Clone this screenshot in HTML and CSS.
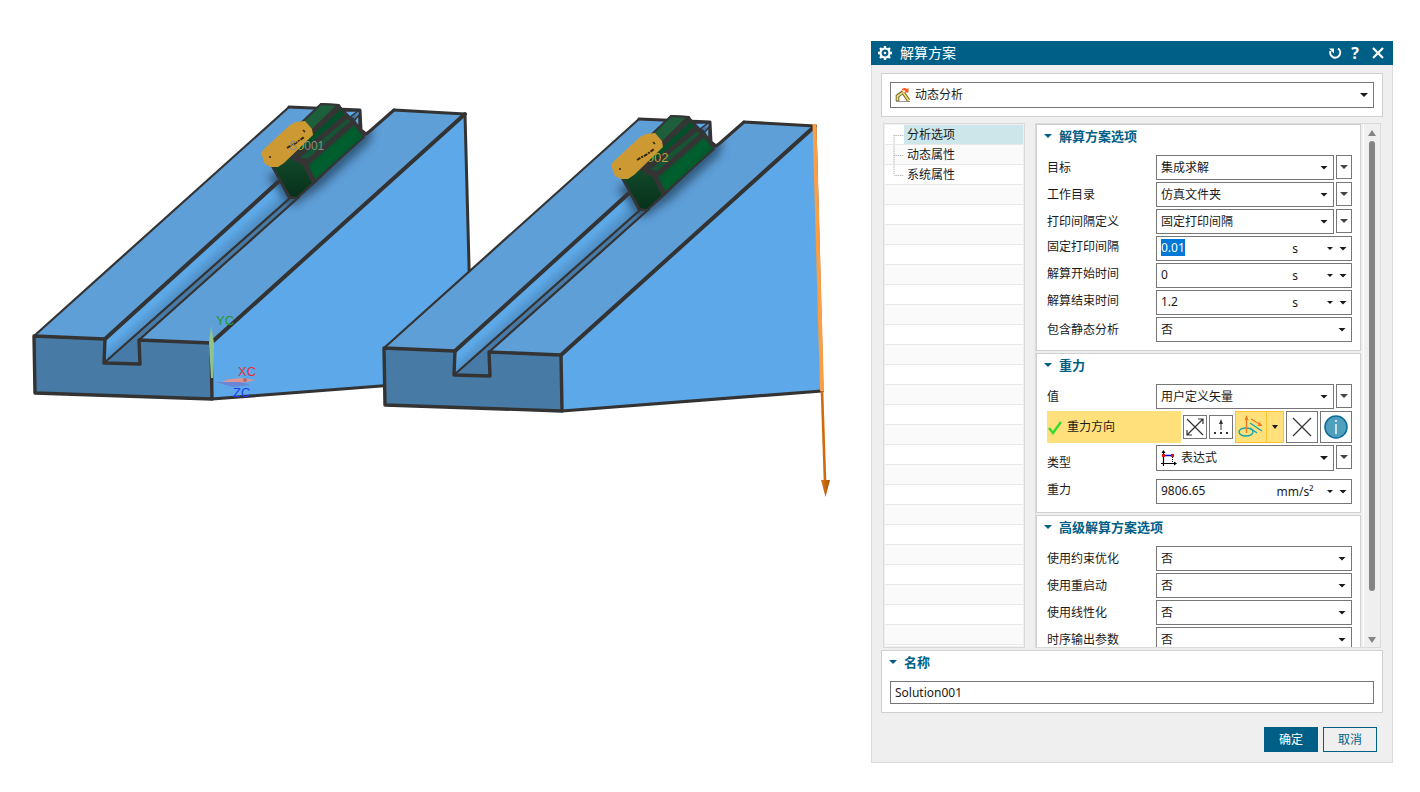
FILE: index.html
```html
<!DOCTYPE html>
<html lang="zh-CN">
<head>
<meta charset="utf-8">
<title>解算方案</title>
<link rel="stylesheet" href="styles.css">
</head>
<body>
<main class="app">
  <svg class="scene" viewBox="0 0 871 792" preserveAspectRatio="xMinYMin meet" aria-label="模型视图">
    <defs>
      <linearGradient id="wall" gradientUnits="userSpaceOnUse" x1="180" y1="271" x2="200" y2="293">
        <stop offset="0.2" stop-color="#5da9e8"/><stop offset="1" stop-color="#4173a0"/>
      </linearGradient>
      <linearGradient id="side" x1="0" y1="0" x2="1" y2="1">
        <stop offset="0" stop-color="#00461f"/><stop offset="0.5" stop-color="#00602f"/><stop offset="1" stop-color="#003818"/>
      </linearGradient>
      <linearGradient id="front" x1="0" y1="0" x2="0" y2="1">
        <stop offset="0" stop-color="#134a2b"/><stop offset="1" stop-color="#06301a"/>
      </linearGradient>
      <filter id="soft" x="-30%" y="-30%" width="160%" height="160%"><feGaussianBlur stdDeviation="5"/></filter>
      <clipPath id="topface"><path d="M34 336 L289 107 L360 110 L361 130 L366 134 L370 131 L394 110 L465 114 L211 343 L104 363 Z"/></clipPath>
      <g id="ramp">
        <path d="M34 336 L289 107 L360 110 L361 130 L366 134 L370 131 L394 110 L465 114 L211 343 L139 340 L140 364 L104 363 L105 339 Z" fill="#5f9fd8"/>
        <path d="M211 343 L465 114 L472 379 L212 399 Z" fill="#5da8e8"/>
        <path d="M105 339 L278 182 L300 197 L104 363 Z" fill="url(#wall)"/>
        <path d="M104 363 L290 199 L299 197 L139 340 L140 364 Z" fill="#477aa6"/>
        <path d="M34 336 L105 339 L104 363 L140 364 L139 340 L211 343 L212 399 L35 393 Z" fill="#477ba6"/>
        <path d="M267 177 L292 206 L320 188 L370 142 L372 128 L340 105 L300 160 Z" fill="#24435f" opacity="0.75" filter="url(#soft)" clip-path="url(#topface)"/>
        <g fill="none" stroke="#333333" stroke-linejoin="round" stroke-linecap="round">
          <path stroke-width="2.2" d="M34 336 L289 107"/>
          <path stroke-width="3" d="M289 107 L360 110 L361 130 L366 134 L370 131 L394 110"/>
          <path stroke-width="3" d="M394 110 L465 114 L472 379"/>
          <path stroke-width="4" d="M105 339 L278 182"/>
          <path stroke-width="2.2" d="M104 363 L290 198 M139 340 L299 197"/>
          <path stroke-width="4" d="M211 343 L465 114"/>
          <path stroke-width="3.4" d="M34 336 L105 339 L104 363 L140 364 L139 340 L211 343 L212 399 L35 393 Z"/>
          <path stroke-width="3.2" d="M212 399 L472 379"/>
        </g>
        <path d="M344 111 L358 111 L350 117 Z M354 121 L359 115 L359 127 Z" fill="#5da8e8" stroke="#333" stroke-width="1.5"/>
        <g stroke="#353535" stroke-width="2" stroke-linejoin="round">
          <path d="M272 166 L321 104 L339 105 L345 115 L353 119 L364 135 L314 183 L297 198 L289 198 Z" fill="#353535"/>
          <path d="M280 143 L321 104 L338 105 L298 144 Z" fill="#1d5f3a"/>
          <path d="M341 108 L345 115 L302 152 L298 147 Z" fill="#00512a"/>
          <path d="M347 118 L352 121 L308 160 L298 158 Z" fill="#175335"/>
          <path d="M354 124 L364 137 L315 181 L307 165 Z" fill="url(#side)"/>
          <path d="M272 166 L288 156 L304 165 L313 183 L297 198 L290 197 Z" fill="url(#front)"/>
        </g>
      </g>
      <g id="tag">
        <path d="M261 153 L264 149 L290 125 L296 122 L305 121 L312 129 L313 135 L284 163 L278 167 L271 167 L265 164 Z" fill="#cc9933"/>
        <path d="M287 148 L292 145 L296 143 L304 137" fill="none" stroke="#33280f" stroke-width="2" stroke-dasharray="4 1 2 1"/>
        <path d="M269 157 h2 M303 130 l2 2" stroke="#33280f" stroke-width="1.5"/>
      </g>
      <linearGradient id="arrowhead"><stop offset="0" stop-color="#e0781c"/><stop offset="1" stop-color="#a85205"/></linearGradient>
    </defs>
    <use href="#ramp"/>
    <use href="#tag"/>
    <text x="289" y="150" class="tag-text tag-text-muted">S<tspan class="tag-text">0</tspan>001</text>
    <path d="M209 343 L211 326 L214 343 L213 378 L211 378 Z" fill="#8fc48c"/>
    <path d="M215 383 L236 384 L250 381 L243 379 L238 379 Z" fill="#dc9b9b"/>
    <path d="M223 380 L240 378 L256 380 L241 383 Z" fill="#df9494"/>
    <path d="M215 382 L240 382 L251 385 L233 387 Z" fill="#6a86d6"/>
    <circle cx="245" cy="380" r="2" fill="#b06868"/>
    <text x="216" y="325" class="axis axis-y">YC</text>
    <text x="238" y="376" class="axis axis-x">XC</text>
    <text x="233" y="397" class="axis axis-z">ZC</text>
    <use href="#ramp" x="350" y="12"/>
    <text x="638" y="162" class="tag-text">S002</text>
    <use href="#tag" x="350" y="12"/>
    <path d="M814.500 124 L822 391" stroke="#fa9f45" stroke-width="4" fill="none"/>
    <path d="M822 391 L825 481" stroke="#d06a0c" stroke-width="2.600" fill="none"/>
    <path d="M821 480 L830 480 L825.500 497 Z" fill="url(#arrowhead)"/>
  </svg>

  <section class="dialog" role="dialog" aria-labelledby="dlg-title">
    <header class="titlebar">
      <svg class="gear" viewBox="0 0 14 14" aria-hidden="true"><circle cx="7" cy="7" r="4.500" fill="none" stroke="#fff" stroke-width="2.200"/><circle cx="7" cy="7" r="1.300" fill="#fff"/><path d="M7 0v3M7 11v3M0 7h3M11 7h3M2 2l2 2M10 10l2 2M2 12l2-2M10 4l2-2" stroke="#fff" stroke-width="2.400"/></svg>
      <h1 id="dlg-title">解算方案</h1>
      <button class="tb-btn" aria-label="重置"><svg viewBox="0 0 14 14"><path d="M10 2.500A5 5 0 1 1 2.500 5" fill="none" stroke="#fff" stroke-width="2"/><path d="M1 2.500h5v5z" fill="#fff"/></svg></button>
      <button class="tb-btn help" aria-label="帮助">?</button>
      <button class="tb-btn close" aria-label="关闭"><svg viewBox="0 0 14 14"><path d="M2 2l10 10M12 2L2 12" stroke="#fff" stroke-width="2.200"/></svg></button>
    </header>

    <div class="dialog-body">
      <div class="panel type-panel">
        <div class="combo type-combo">
          <svg class="combo-icon" viewBox="0 0 16 16" aria-hidden="true"><path d="M1 14.500h14" stroke="#999" stroke-width="1"/><path d="M2.500 14V9L8 5" fill="none" stroke="#6f6318" stroke-width="3.600"/><path d="M2.500 13.500V9L8 5.500" fill="none" stroke="#e8dc8c" stroke-width="1.800"/><path d="M8.500 6l5 7.500" stroke="#6f6318" stroke-width="3.600"/><path d="M8.500 6l5 7.500" stroke="#f0dc70" stroke-width="1.800"/><path d="M7 2q3-2 5 0l1.500-1v4.500h-4.500l1.500-1.500q-1-1-3.500-.5z" fill="#ff5a1e"/></svg>
          <select aria-label="解算类型"><option>动态分析</option></select>
        </div>
      </div>

      <div class="workspace">
        <ul class="tree">
          <li class="active"><svg viewBox="0 0 20 20"><path d="M9.500 10v10M10 10.500h9"/></svg><span>分析选项</span></li>
          <li><svg viewBox="0 0 20 20"><path d="M9.500 0v20M10 10.500h9"/></svg><span>动态属性</span></li>
          <li><svg viewBox="0 0 20 20"><path d="M9.500 0v10M10 10.500h9"/></svg><span>系统属性</span></li>
        </ul>

        <div class="scroller">
          <div class="cards">
            <section class="card">
              <h2>解算方案选项</h2>
              <div class="row"><label for="f1">目标</label><div class="field"><div class="combo"><select id="f1"><option>集成求解</option></select></div><button class="more" aria-label="更多"></button></div></div>
              <div class="row"><label for="f2">工作目录</label><div class="field"><div class="combo"><select id="f2"><option>仿真文件夹</option></select></div><button class="more" aria-label="更多"></button></div></div>
              <div class="row"><label for="f3">打印间隔定义</label><div class="field"><div class="combo"><select id="f3"><option>固定打印间隔</option></select></div><button class="more" aria-label="更多"></button></div></div>
              <div class="row numeric"><label for="f4">固定打印间隔</label><div class="field quantity"><input id="f4" value="0.01"><div class="unit"><select aria-label="单位"><option>s</option></select></div><button class="menu" aria-label="选项"></button></div></div>
              <div class="row numeric"><label for="f5">解算开始时间</label><div class="field quantity"><input id="f5" value="0"><div class="unit"><select aria-label="单位"><option>s</option></select></div><button class="menu" aria-label="选项"></button></div></div>
              <div class="row numeric"><label for="f6">解算结束时间</label><div class="field quantity"><input id="f6" value="1.2"><div class="unit"><select aria-label="单位"><option>s</option></select></div><button class="menu" aria-label="选项"></button></div></div>
              <div class="row"><label for="f7">包含静态分析</label><div class="field"><div class="combo"><select id="f7"><option>否</option></select></div></div></div>
            </section>

            <section class="card">
              <h2>重力</h2>
              <div class="row"><label for="g1">值</label><div class="field"><div class="combo"><select id="g1"><option>用户定义矢量</option></select></div><button class="more" aria-label="更多"></button></div></div>
              <div class="direction">
                <div class="direction-label"><svg viewBox="0 0 16 16" aria-hidden="true"><path d="M2 9l4 5L14 3" fill="none" stroke="#2fdc2f" stroke-width="2.400"/></svg>重力方向</div>
                <button class="tool small" aria-label="反向"><svg viewBox="0 0 22 22"><path d="M3 3l16 16M3 19L19 3M3 14v5h5M14 3h5v5" fill="none" stroke="#333" stroke-width="1.200"/></svg></button>
                <button class="tool small" aria-label="矢量对话框"><svg viewBox="0 0 22 22"><path d="M11 14V5" stroke="#333"/><path d="M9 8l2-5 2 5z" fill="#333"/><path d="M4 16h2v2H4zM10 16h2v2h-2zM16 16h2v2h-2z" fill="#333"/></svg></button>
                <div class="split">
                  <button class="split-main" aria-label="自动判断矢量"><svg viewBox="0 0 30 30"><ellipse cx="10" cy="20" rx="7" ry="4" fill="none" stroke="#12a5b8" stroke-width="1.400"/><path d="M10.500 21V6M15 7l10 6" stroke="#f07a1e" stroke-width="1.400"/><path d="M8.500 8l2-5 2 5zM21.500 14l5 0-3-4z" fill="#f07a1e"/><path d="M14 11l12 8M14 16l7 5" stroke="#12a5b8" stroke-width="1.400"/></svg></button>
                  <button class="split-arrow" aria-label="矢量列表"></button>
                </div>
                <button class="tool" aria-label="清除"><svg viewBox="0 0 30 30"><path d="M6 6l18 18M24 6L6 24" stroke="#333" stroke-width="1.200"/></svg></button>
                <button class="tool" aria-label="信息"><svg viewBox="0 0 30 30"><circle cx="15" cy="15" r="11" fill="#519fbf" stroke="#0c6d96" stroke-width="1.500"/><path d="M15 12v10M15 8v2" stroke="#fff" stroke-width="1.400"/></svg></button>
              </div>
              <div class="row typed"><label for="g2">类型</label><div class="field"><div class="combo"><svg class="combo-icon" viewBox="0 0 16 16" aria-hidden="true"><path d="M2.500 16V2M0 13.500h14" stroke="#000" stroke-width="1.200"/><path d="M.5 3l2-3 2 3zM13 11.500l3 2-3 2z" fill="#000"/><path d="M3 5.500h8" stroke="#0000e0" stroke-width="1.500"/><path d="M11.500 7v6" stroke="#000" stroke-dasharray="1 1"/><path d="M1 4h3v3H1zM10 4h3v3h-3z" fill="#e01010"/></svg><select id="g2"><option>表达式</option></select></div><button class="more" aria-label="更多"></button></div></div>
              <div class="row numeric"><label for="g3">重力</label><div class="field quantity"><input id="g3" value="9806.65"><div class="unit"><select aria-label="单位"><option>mm/s²</option></select></div><button class="menu" aria-label="选项"></button></div></div>
            </section>

            <section class="card">
              <h2>高级解算方案选项</h2>
              <div class="row"><label for="a1">使用约束优化</label><div class="field"><div class="combo"><select id="a1"><option>否</option></select></div></div></div>
              <div class="row"><label for="a2">使用重启动</label><div class="field"><div class="combo"><select id="a2"><option>否</option></select></div></div></div>
              <div class="row"><label for="a3">使用线性化</label><div class="field"><div class="combo"><select id="a3"><option>否</option></select></div></div></div>
              <div class="row"><label for="a4">时序输出参数</label><div class="field"><div class="combo"><select id="a4"><option>否</option></select></div></div></div>
            </section>
          </div>
          <div class="scrollbar" aria-hidden="true"><span class="sb-up"></span><span class="sb-track"><span class="sb-thumb"></span></span><span class="sb-down"></span></div>
        </div>
      </div>

      <div class="panel name-panel">
        <h2><label for="name">名称</label></h2>
        <input id="name" value="Solution001">
      </div>

      <footer class="actions">
        <button class="btn primary">确定</button>
        <button class="btn">取消</button>
      </footer>
    </div>
  </section>
</main>
<script src="main.js"></script>
</body>
</html>
```
FILE: styles.css
```css
* { box-sizing: border-box; }

body {
  margin: 0;
  background: #fff;
  color: #1a1a1a;
  font: 12px/18px "Noto Sans", "Noto Sans CJK SC", sans-serif;
}

button, input, select {
  margin: 0;
  padding: 0;
  border: 0;
  border-radius: 0;
  background: none;
  color: inherit;
  font: inherit;
  outline: none;
}

select { appearance: none; }
h1, h2 { margin: 0; }
svg { display: block; }

.app {
  display: flex;
  align-items: flex-start;
  min-height: 100vh;
  padding-right: 27px;
  overflow: hidden;
}

.scene { flex: 1; min-width: 0; }

.tag-text { font: 13px "Liberation Sans", sans-serif; fill: #cc9a3c; }
.tag-text-muted { font-size: 12px; fill: #8b8b7c; }
.axis { font: 13px "Liberation Sans", sans-serif; }
.axis-x { fill: #e0303a; }
.axis-y { fill: #1f9a32; }
.axis-z { fill: #1c3cf0; }

/* Dialog frame */
.dialog {
  flex: 0 0 522px;
  margin-top: 41px;
  background: #efefef;
}

.titlebar {
  display: flex;
  align-items: center;
  height: 24px;
  padding: 0 8px 0 7px;
  background: #005f87;
  color: #fff;
}

.titlebar h1 {
  flex: 1;
  margin-left: 8px;
  font-size: 14px;
  font-weight: 400;
  line-height: 24px;
}

.gear { width: 14px; height: 14px; }

.tb-btn {
  display: grid;
  place-items: center;
  width: 14px;
  height: 20px;
  margin-left: 6px;
}

.tb-btn svg { width: 14px; height: 14px; }
.tb-btn.help { font-size: 16px; font-weight: 700; line-height: 20px; }
.tb-btn.close { margin-left: 9px; }

.dialog-body {
  padding: 8px 9px 10px;
  border: 1px solid #dadada;
  border-top: 0;
}

.panel {
  border: 1px solid #d0d0d0;
  background: #fff;
}

.type-panel { padding: 8px; }

/* Combo box */
.combo {
  display: grid;
  grid-template-columns: auto minmax(0, 1fr);
  align-items: center;
  flex: 1;
  min-width: 0;
  height: 25px;
  border: 1px solid #767676;
  background: #fff;
}

.combo select {
  grid-area: 1 / 2;
  width: 100%;
  height: 23px;
  padding-left: 4px;
}

.combo::after,
.more::after,
.menu::after,
.unit::after,
.split-arrow::after,
.card h2::before,
.name-panel h2::before,
.sb-up,
.sb-down {
  content: "";
  width: 8px;
  height: 4px;
  background: #1a1a1a;
  clip-path: polygon(0 0, 100% 0, 50% 100%);
}

.combo::after {
  grid-area: 1 / 2;
  justify-self: end;
  margin-right: 5px;
  pointer-events: none;
}

.combo-icon {
  grid-area: 1 / 1;
  width: 16px;
  height: 16px;
  margin-left: 4px;
}

.type-combo { height: 26px; }

/* Middle area: tree and option cards */
.workspace {
  display: flex;
  gap: 10px;
  height: 525px;
  margin: 6px 2px 2px 2px;
}

.tree {
  flex: 0 0 142px;
  margin: 0;
  padding: 1px;
  border: 1px solid #dadada;
  list-style: none;
  overflow: hidden;
  background: #fff repeating-linear-gradient(#fff 0 19px, #e8e8e8 19px 20px, #fafafa 20px 39px, #e8e8e8 39px 40px) content-box;
}

.tree li { display: flex; height: 20px; }
.tree svg { width: 19px; height: 20px; fill: none; stroke: #9a9a9a; stroke-dasharray: 1 1; }
.tree span { flex: 1; height: 19px; padding-left: 3px; line-height: 19px; }
.tree .active span { background: #cde6ea; }

.scroller {
  display: flex;
  flex: 1;
  min-width: 0;
  border: 1px solid #dadada;
  overflow: hidden;
}

.cards {
  display: flex;
  flex: 1;
  flex-direction: column;
  gap: 2px;
  min-width: 0;
}

.card {
  flex: none;
  padding: 0 8px 8px 10px;
  border: 1px solid #d0d0d0;
  background: #fff;
}

.card h2,
.name-panel h2 {
  display: flex;
  align-items: center;
  gap: 7px;
  color: #005f87;
  font-size: 13px;
  font-weight: 700;
  line-height: 22px;
}

.card h2 { margin: 0 0 8px -3px; }
.card h2::before,
.name-panel h2::before { background: #005f87; }

.row {
  display: flex;
  align-items: center;
  margin-bottom: 2px;
}

.row:last-child { margin-bottom: 0; }
.row > label { flex: 1; min-width: 0; }
.numeric > label { padding-bottom: 4px; }

.field {
  display: flex;
  align-items: flex-start;
  gap: 2px;
  flex: none;
  width: 196px;
}

.more {
  display: grid;
  place-items: center;
  width: 16px;
  height: 24px;
  border: 1px solid #767676;
}

.more::after { background: #444; }

.quantity {
  align-items: center;
  gap: 0;
  height: 25px;
  border: 1px solid #767676;
}

.quantity input {
  flex: 1;
  width: 0;
  min-width: 0;
  margin: 0 0 2px 4px;
  line-height: 17px;
}

.quantity input::selection { background: #0078d7; color: #fff; }

.unit { display: flex; align-items: center; gap: 5px; }
.unit::after { width: 6px; height: 3px; }
.unit select { width: 54px; height: 20px; text-align: center; text-align-last: center; }
.menu { display: grid; place-items: center; width: 20px; height: 20px; margin-right: -2px; }

/* Gravity direction */
.direction {
  display: flex;
  align-items: center;
  gap: 2px;
  height: 32px;
  margin-bottom: 2px;
}

.direction-label {
  display: flex;
  flex: 1;
  align-items: center;
  gap: 4px;
  height: 32px;
  background: #ffe07a;
}

.direction-label svg { width: 16px; height: 16px; }

.tool {
  width: 32px;
  height: 32px;
  border: 1px solid #767676;
  background: #fff;
}

.tool.small { width: 24px; height: 24px; }

.split {
  display: flex;
  width: 49px;
  height: 32px;
  border: 1px solid #fcc42c;
  background: #ffe07a;
}

.split-main { width: 31px; border-right: 1px solid #fcc42c; }
.split-main svg { width: 30px; height: 30px; }
.split-arrow { display: grid; flex: 1; place-items: center; }
.split-arrow::after { width: 6px; height: 4px; }

.typed { align-items: flex-start; margin-bottom: 7px; }
.typed > label { padding-top: 9px; }
.typed .combo { height: 26px; }

/* Scroll bar */
.scrollbar {
  display: flex;
  flex: 0 0 17px;
  flex-direction: column;
  align-items: center;
  margin-left: 2px;
  padding: 6px 0 4px;
  border-left: 1px solid #fff;
}

.sb-up, .sb-down { width: 8px; height: 6px; background: #848484; }
.sb-up { clip-path: polygon(50% 0, 100% 100%, 0 100%); }
.sb-track { flex: 1; width: 6px; padding: 5px 0 46px; }
.sb-thumb { display: block; height: 100%; border-radius: 3px; background: #848484; }

/* Name and actions */
.name-panel { padding: 0 8px 8px; }
.name-panel h2 { margin-left: -1px; margin-bottom: 8px; }
.name-panel input {
  display: block;
  width: 100%;
  height: 23px;
  padding-left: 4px;
  border: 1px solid #767676;
}

.actions {
  display: flex;
  justify-content: flex-end;
  gap: 5px;
  margin: 14px 6px 0 0;
}

.btn {
  width: 54px;
  height: 25px;
  border: 1px solid #005f87;
  color: #005f87;
}

.btn.primary { background: #005f87; color: #fff; }
```
FILE: main.js
```js
const interval = document.getElementById("f4");
interval.focus({ preventScroll: true });
interval.select();
```
